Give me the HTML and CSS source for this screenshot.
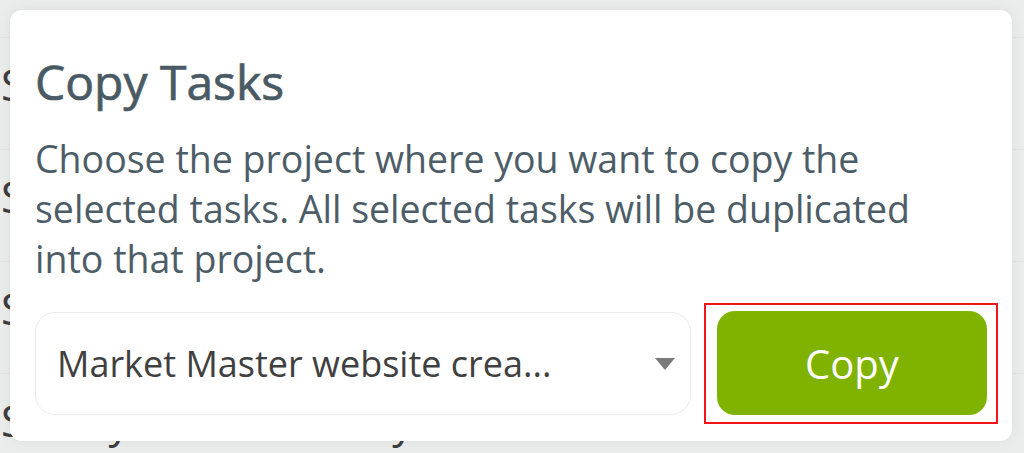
FILE: index.html
```html
<!DOCTYPE html>
<html lang="en">
<head>
<meta charset="utf-8">
<title>Copy Tasks</title>
<link rel="stylesheet" href="styles.css">
</head>
<body>
<div class="bg">
  <div class="bg-row"><span>S</span></div>
  <div class="bg-row"><span>S</span></div>
  <div class="bg-row"><span>S</span></div>
  <div class="bg-row bg-row-last"><span>S</span><span class="g1">y</span><span class="g2">y</span></div>
</div>

<div class="card">
  <h1 class="title">Copy Tasks</h1>
  <p class="desc">Choose the project where you want to copy the selected tasks. All selected tasks will be duplicated into that project.</p>
  <div class="actions">
    <div class="select">
      <span class="select-text">Market Master website crea...</span>
      <svg class="caret" width="20" height="12" viewBox="0 0 20 12"><path d="M0 0 H20 L10 12 Z" fill="#7a7a7a"/></svg>
    </div>
    <div class="highlight">
      <button class="copy-btn">Copy</button>
    </div>
  </div>
</div>
</body>
</html>
```

FILE: styles.css
```css
html, body {
  margin: 0;
  padding: 0;
}
body {
  width: 1024px;
  height: 453px;
  overflow: hidden;
  background: #ebeded;
  font-family: "Open Sans", "Noto Sans", sans-serif;
  position: relative;
}
.bg {
  height: 453px;
  box-sizing: border-box;
  overflow: hidden;
  padding-top: 37px;
}
.bg-row {
  height: 111px;
  border-top: 1px solid #e0e5e8;
  padding-left: 1px;
  font-size: 43px;
  line-height: 43px;
  color: #3d3d3d;
  display: flex;
  align-items: flex-start;
}
.bg-row-last {
  height: 79px;
  overflow: hidden;
}
.bg-row span {
  display: block;
  padding-top: 25px;
}
.bg-row .g1 {
  margin-left: 84px;
}
.bg-row .g2 {
  margin-left: 262px;
}
.card {
  position: absolute;
  left: 10px;
  top: 10px;
  width: 1002px;
  height: 431px;
  box-sizing: border-box;
  background: #ffffff;
  border-radius: 12px;
  box-shadow: 0 0 14px rgba(0, 0, 0, 0.07);
  padding: 44px 14px 17px 25px;
  display: flex;
  flex-direction: column;
}
.title {
  margin: 0;
  font-size: 48px;
  font-weight: 500;
  line-height: 56px;
  color: #4a5a64;
  -webkit-text-stroke: 0.7px #4a5a64;
}
.desc {
  margin: 24px 0 0;
  max-width: 900px;
  font-size: 37.5px;
  line-height: 50px;
  color: #4d5d67;
}
.actions {
  margin-top: 19px;
  display: flex;
  align-items: center;
  gap: 13px;
  height: 121px;
}
.select {
  flex: 1;
  height: 103px;
  box-sizing: border-box;
  border: 1px solid #ebebeb;
  border-radius: 20px;
  display: flex;
  align-items: center;
  justify-content: space-between;
  padding: 0 15px 0 21px;
  font-size: 36px;
  color: #404040;
}
.caret {
  display: block;
}
.highlight {
  width: 294px;
  height: 121px;
  box-sizing: border-box;
  border: 2px solid #f2131b;
  padding: 6px 9px 7px 11px;
}
.copy-btn {
  display: flex;
  align-items: center;
  justify-content: center;
  width: 270px;
  height: 104px;
  border: none;
  border-radius: 18px;
  background: #80b300;
  color: #ffffff;
  font-family: "Open Sans", "Noto Sans", sans-serif;
  font-size: 40px;
  padding: 0;
}
```
